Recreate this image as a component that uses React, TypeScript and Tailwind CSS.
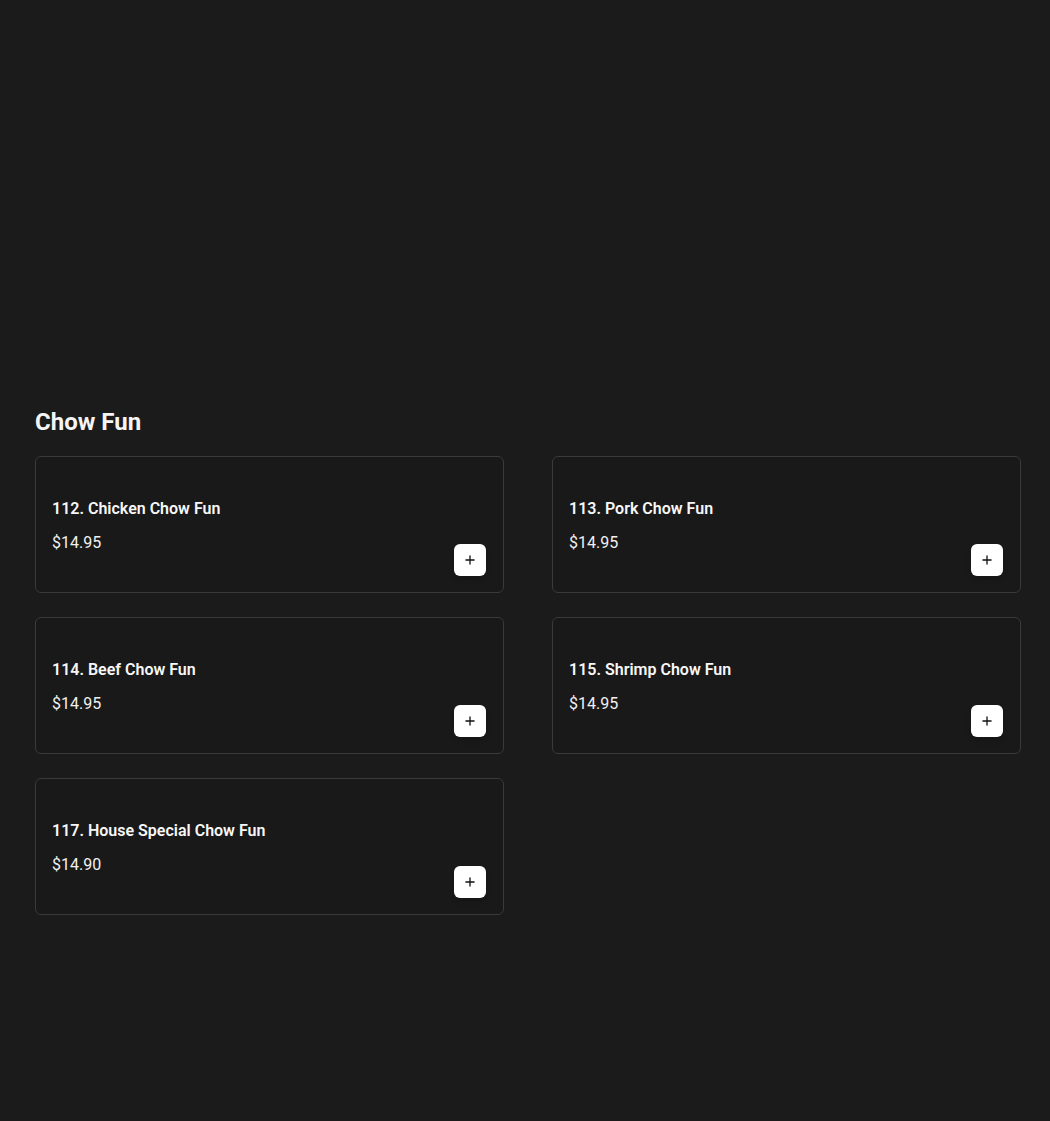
import { Plus } from "lucide-react";

const items = [
  { name: "112. Chicken Chow Fun", price: "$14.95" },
  { name: "113. Pork Chow Fun", price: "$14.95" },
  { name: "114. Beef Chow Fun", price: "$14.95" },
  { name: "115. Shrimp Chow Fun", price: "$14.95" },
  { name: "117. House Special Chow Fun", price: "$14.90" },
];

const ItemCard: React.FC<{ name: string; price: string }> = ({ name, price }) => {
  return (
    <div className="flex h-[137px] justify-between rounded-md border border-[#3a3a3a] bg-[#191919] p-4 pr-[17px]">
      <div className="flex flex-col pt-[24px]">
        <p className="text-base leading-6 font-semibold text-[#f7f7f7]">{name}</p>
        <p className="mt-[10px] text-base leading-6 text-[#f0f0f0]">{price}</p>
      </div>
      <div className="flex items-end">
        <button className="flex h-8 w-8 items-center justify-center rounded-md bg-white shadow-md">
          <Plus size={14} strokeWidth={2.25} className="text-[#111]" />
        </button>
      </div>
    </div>
  );
};

export default function App() {
  return (
    <div
      className="min-h-[1121px] bg-[#1b1b1b] px-[35px] pt-[406px]"
      style={{ fontFamily: "Roboto, 'Liberation Sans', sans-serif" }}
    >
      <h2 className="text-2xl leading-8 font-bold text-[#f5f5f5]">Chow Fun</h2>
      <div className="mt-[18px] grid w-[986px] grid-cols-2 gap-x-[48px] gap-y-[24px]">
        {items.map((item) => (
          <ItemCard key={item.name} name={item.name} price={item.price} />
        ))}
      </div>
    </div>
  );
}
